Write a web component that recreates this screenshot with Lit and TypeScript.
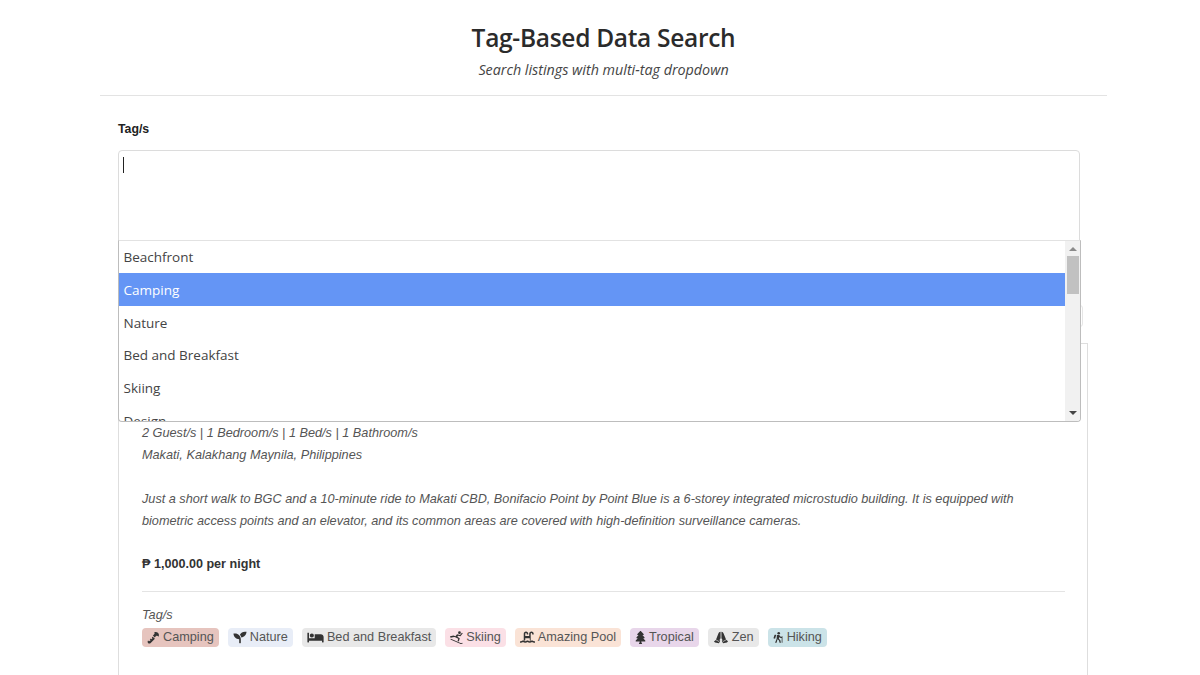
import { LitElement, html, css, svg } from "lit";
import { customElement } from "lit/decorators.js";

const ic = (vb: string, body: unknown, w = 14) =>
  html`<svg class="ic" style="width:${w}px" viewBox=${vb} fill="#333">${body}</svg>`;

const ICONS: Record<string, unknown> = {
  camping: ic("0 0 24 24", svg`<path d="M1.500 19.500l2-2 1.200 1.200 1.800-1.800-1.200-1.200 1.800-1.800 1.200 1.200 1.800-1.800-1.200-1.200 1.700-1.700 4 4-7.800 7.800c-1.500 1.300-3.200 1.300-4.600.2-1.200-1.200-1.500-3-.7-4.900zM14.200 11.800l-3.300-3.300 2.300-2.300c1.300-1.300 1-3 .2-4.200 2.500-.8 5.500-.3 7.200 1.700 1.700 2 1.800 4.800.6 7-1-1.600-2.800-2.200-4.500-1.300z"/>`, 13),
  nature: ic("0 0 512 512", svg`<path d="M64 96H0c0 123.700 100.300 224 224 224v144c0 8.800 7.200 16 16 16h32c8.800 0 16-7.200 16-16V320C288 196.300 187.700 96 64 96zm384-64c-84.200 0-157.400 46.500-195.700 115.200 27.700 30.200 48.200 66.900 59 107.600C424 243.100 512 147.900 512 32h-64z"/>`),
  bed: ic("0 0 640 512", svg`<path d="M176 256c44.110 0 80-35.890 80-80s-35.890-80-80-80-80 35.890-80 80 35.890 80 80 80zm352-128H304c-8.840 0-16 7.160-16 16v144H64V80c0-8.840-7.160-16-16-16H16C7.160 64 0 71.160 0 80v352c0 8.840 7.160 16 16 16h32c8.840 0 16-7.160 16-16v-48h512v48c0 8.840 7.160 16 16 16h32c8.840 0 16-7.160 16-16V240c0-61.860-50.140-112-112-112z"/>`, 17),
  skiing: ic("0 0 24 24", svg`<circle cx="17.500" cy="3" r="2.500"/><path d="M0 9.500l6.500-1.300 3.500 1.300 3-3.300 5.500 1 3.500-4.200 1.600 1.300-4.300 5.200-4.200-.8-1.600 2 4.500 2.800-1.700 5.700-2.300-.7 1.200-4-5.500-2.800-2-.7-6.700 1.300zM1.500 14.300l18 8c1 .4 2.200.2 3-.5l1 1.300c-1.300 1-3.100 1.200-4.600.5L.8 15.800z"/>`, 13),
  pool: ic("0 0 640 512", svg`<path d="M624 416h-16c-26 0-46-8.400-56-18-9-8-20-14-32-14h-16c-12 0-23 6-32 14-10 9.600-30 18-56 18s-46-8.400-56-18c-9-8-20-14-32-14h-16c-12 0-23 6-32 14-10 9.600-30 18-56 18s-46-8.400-56-18c-9-8-20-14-32-14h-16c-12 0-23 6-32 14-10 9.600-30 18-56 18H16c-9 0-16 7-16 16v32c0 9 7 16 16 16h16c38.600 0 72.700-12 96-32 23.300 20 57.400 32 96 32s72.700-12 96-32c23.300 20 57.400 32 96 32s72.700-12 96-32c23.300 20 57.400 32 96 32h16c9 0 16-7 16-16v-32c0-9-7-16-16-16zm-400-32v-96h192v96c19 0 31 9.400 40 16V96c0-17.600 14.400-32 32-32s32 14.400 32 32v16c0 9 7 16 16 16h32c9 0 16-7 16-16V96c0-53-43-96-96-96s-96 43-96 96v96H224V96c0-17.600 14.400-32 32-32s32 14.400 32 32v16c0 9 7 16 16 16h32c9 0 16-7 16-16V96c0-53-43-96-96-96s-96 43-96 96v304c9-6.600 21-16 40-16z"/>`, 15),
  tropical: ic("0 0 384 512", svg`<path d="M378.310 378.490L298.420 288h30.630c9.010 0 16.980-5 20.780-13.060 3.800-8.040 2.550-17.260-3.280-24.050L268.420 160h28.890c9.100 0 17.300-5.350 20.860-13.610 3.520-8.130 1.860-17.590-4.240-24.080L203.660 4.830c-6.030-6.450-17.280-6.450-23.320 0L70.060 122.310c-6.100 6.490-7.750 15.950-4.240 24.080C69.380 154.650 77.590 160 86.690 160h28.890l-78.140 90.910c-5.810 6.780-7.060 15.990-3.270 24.040C37.970 283 45.930 288 54.950 288h30.630L5.690 378.490c-6 6.790-7.360 16.090-3.560 24.260 3.750 8.050 12 13.250 21.010 13.250H160v24.450l-30.290 48.400c-5.320 10.640 2.420 23.160 14.310 23.160h95.960c11.890 0 19.630-12.520 14.310-23.160L224 440.450V416h136.860c9.010 0 17.260-5.200 21.010-13.250 3.800-8.170 2.440-17.470-3.560-24.260z"/>`, 11),
  zen: ic("0 0 26 24", svg`<path d="M12.200 1.500v12l-2.200 3.500 1.600 1.200-2.400 4.300-7.200-1.300L0 19.500l3.500-3L8 5c.7-2 2.300-3.400 4.200-3.500zM13.800 1.500v12l2.200 3.500-1.600 1.200 2.400 4.300 7.200-1.300 2-2.200-3.500-3L18 5c-.7-2-2.300-3.400-4.200-3.500z"/><path d="M3 16l6.500 3.500M23 16l-6.500 3.500" stroke="#e8e8e8" stroke-width="1.200" fill="none"/>`, 16),
  hiking: ic("0 0 24 24", svg`<circle cx="12.500" cy="2.800" r="2.800"/><path d="M8.500 6.500h5l3.200 4 3.300.6v2.600l-4.800-.9-1.500-1.700-.9 3.500 3.200 3.200 1.300 5.700h-3l-1.100-4.800-3.400-3-2 7.800H4.500L8 14.800zM7 6.500 4.500 14.500 1 13.500 3.300 6.500c.4-1 2.400-1 3.700 0zM19 9.500h1.600v14H19z"/>`, 11),
};

const TAGS = [
  ["camping", "Camping", "#e6c4be"],
  ["nature", "Nature", "#e8edf7"],
  ["bed", "Bed and Breakfast", "#e8e8e8"],
  ["skiing", "Skiing", "#fbe0e6"],
  ["pool", "Amazing Pool", "#fae3d6"],
  ["tropical", "Tropical", "#e8d6ea"],
  ["zen", "Zen", "#e8e8e8"],
  ["hiking", "Hiking", "#cbe3e8"],
];
const OPTIONS = ["Beachfront", "Camping", "Nature", "Bed and Breakfast", "Skiing", "Design"];

@customElement("app-root")
export class AppRoot extends LitElement {
  static styles = css`
    :host { display: block; height: 675px; overflow: hidden; background: #fff; color: #212529;
      font-family: "Open Sans", "Noto Sans", sans-serif; }
    .page { width: 1007px; margin-left: 100px; }
    header { height: 96px; box-sizing: border-box; border-bottom: 1px solid #e3e3e3; text-align: center;
      padding-top: 21px; margin-bottom: -1px; }
    h1 { margin: 0; font-size: 24.500px; letter-spacing: -0.300px; line-height: 34px; font-weight: 600; color: #2b2b2b; }
    .sub { margin: 3px 0 0; font-size: 14.300px; line-height: 24px; font-style: italic; color: #444; }
    .form { position: relative; padding: 26px 0 0 18px; }
    label { display: block; font: bold 12.300px/16px "Liberation Sans", Arial, sans-serif; color: #222; margin-bottom: 13px; }
    .input { width: 962px; height: 155px; box-sizing: border-box; border: 1px solid #dcdcdc; border-radius: 4px; padding: 6px 4px; }
    .caret { display: block; width: 1px; height: 16px; background: #222; }
    .behind { width: 965px; height: 22px; box-sizing: border-box; border: 1px solid #e6e6e6; border-radius: 3px; margin-bottom: 16px; }
    .dropdown { position: absolute; left: 18px; top: 145px; width: 963px; height: 182px; box-sizing: border-box;
      background: #fff; border: 1px solid #bdbdbd; border-top-color: #e2e2e2; border-radius: 0 0 4px 4px;
      display: flex; overflow: hidden; z-index: 2; }
    .list { flex: 1; min-width: 0; margin-top: -1px; }
    .opt { height: 32.750px; box-sizing: border-box; padding: 1px 0 0 4.500px; line-height: 33px; font-size: 13.500px; color: #444; }
    .opt.sel { background: #6495f5; color: #fff; }
    .bar { width: 15px; background: #f1f1f1; display: flex; flex-direction: column; align-items: center; }
    .arrow { width: 0; height: 0; border-left: 4px solid transparent; border-right: 4px solid transparent; }
    .up { border-bottom: 4px solid #8a8a8a; margin-top: 6px; }
    .thumb { width: 12px; height: 38px; background: #c1c1c1; margin-top: 5px; }
    .grow { flex: 1; }
    .down { border-top: 4px solid #444; margin-bottom: 6px; }
    .card { width: 970px; box-sizing: border-box; border: 1px solid #dedede; padding: 78px 22px 40px 23px;
      font: italic 12.700px/22px "Liberation Sans", Arial, sans-serif; color: #555; }
    .card p { margin: 0 0 22px; }
    .card p.desc { margin-bottom: 21px; }
    .card p.price { font-weight: bold; font-style: normal; color: #333; margin-bottom: 16px; font-size: 12.600px; }
    hr { border: 0; border-top: 1px solid #e4e4e4; margin: 0 0 12px; }
    .tl { line-height: 22px; height: 24px; }
    .tags { display: flex; gap: 9px; font-style: normal; }
    .tag { display: flex; align-items: center; gap: 3px; height: 19px; padding: 0 5px; border-radius: 4px; white-space: nowrap;
      font-size: 12.700px; line-height: 19px; color: #555; }
    .ic { height: 13px; flex: none; display: block; }
  `;

  render() {
    return html`<div class="page">
      <header>
        <h1>Tag-Based Data Search</h1>
        <p class="sub">Search listings with multi-tag dropdown</p>
      </header>
      <div class="form">
        <label>Tag/s</label>
        <div class="input"><span class="caret"></span></div>
        <div class="behind"></div>
        <div class="dropdown">
          <div class="list">
            ${OPTIONS.map((o, i) => html`<div class="opt ${i === 1 ? "sel" : ""}">${o}</div>`)}
          </div>
          <div class="bar">
            <span class="arrow up"></span><span class="thumb"></span><span class="grow"></span><span class="arrow down"></span>
          </div>
        </div>
        <div class="card">
          <p>2 Guest/s | 1 Bedroom/s | 1 Bed/s | 1 Bathroom/s<br />Makati, Kalakhang Maynila, Philippines</p>
          <p class="desc">Just a short walk to BGC and a 10-minute ride to Makati CBD, Bonifacio Point by Point Blue is a 6-storey integrated microstudio building. It is equipped with biometric access points and an elevator, and its common areas are covered with high-definition surveillance cameras.</p>
          <p class="price">₱ 1,000.00 per night</p>
          <hr />
          <div class="tl">Tag/s</div>
          <div class="tags">
            ${TAGS.map(([k, t, c]) => html`<span class="tag" style="background:${c}">${ICONS[k]}${t}</span>`)}
          </div>
        </div>
      </div>
    </div>`;
  }
}
